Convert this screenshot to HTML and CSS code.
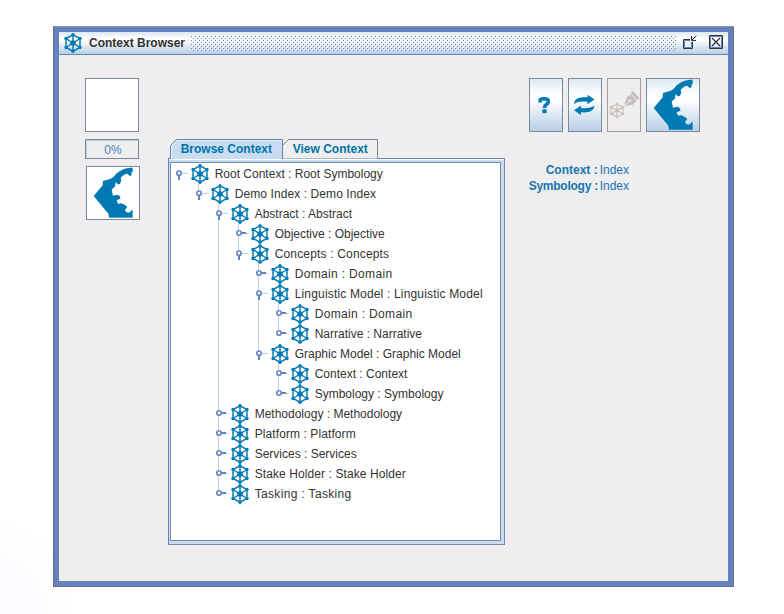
FILE: index.html
```html
<!DOCTYPE html>
<html lang="en">
<head>
<meta charset="utf-8">
<title>Context Browser</title>
<link rel="stylesheet" href="styles.css">
</head>
<body>
<svg class="defs" width="0" height="0">
  <symbol id="hex" viewBox="0 0 18 20">
    <g fill="none" stroke="currentColor" stroke-width="1.45">
      <path d="M9 1.8 16 5.5V14.5L9 18.2 2 14.5V5.5Z"/>
      <path d="M9 1.8V18.2M2 5.5 16 14.5M16 5.5 2 14.5"/>
    </g>
    <g fill="currentColor">
      <circle cx="9" cy="1.7" r="1.7"/><circle cx="16" cy="5.5" r="1.7"/><circle cx="16" cy="14.5" r="1.7"/>
      <circle cx="9" cy="18.3" r="1.7"/><circle cx="2" cy="14.5" r="1.7"/><circle cx="2" cy="5.5" r="1.7"/>
      <circle cx="9" cy="10" r="2.8"/>
    </g>
  </symbol>
  <symbol id="open" viewBox="0 0 13 12">
    <path d="M7 4.5H13" stroke="#b8cfe5"/>
    <circle cx="4" cy="4.2" r="2.2" fill="#fff" stroke="#6382bf" stroke-width="1.6"/>
    <path d="M4 6V11" stroke="#6382bf" stroke-width="2"/>
  </symbol>
  <symbol id="shut" viewBox="0 0 13 12">
    <path d="M7 4.5H13" stroke="#b8cfe5"/>
    <circle cx="4" cy="4" r="2.2" fill="#fff" stroke="#6382bf" stroke-width="1.6"/>
    <path d="M6 4H11" stroke="#6382bf" stroke-width="2"/>
  </symbol>
  <symbol id="kite" viewBox="0 0 162 162">
    <path fill="#007ab3" d="M140 5V19L135 20 138 25 132 31 124 23 117 25 109 30 104 36 106 43 102 54 96 55 89 49 87 61 77 71 81 89 94 86 102 91 103 98 92 103 96 113 106 112 116 116 124 123 117 131 120 137 126 140 134 137 135 133H140V155H69L67 143 23 90 50 58 51 45 74 38 82 34 92 22 103 14 116 8 131 5Z"/>
  </symbol>
</svg>

<main class="window">
  <header class="titlebar">
    <svg class="hex"><use href="#hex"/></svg>
    <h1>Context Browser</h1>
    <svg class="bumps" aria-hidden="true" shape-rendering="crispEdges">
      <defs><pattern id="dots" width="4" height="4" patternUnits="userSpaceOnUse"><path fill="#6382bf" d="M0 0h1v1H0zM2 2h1v1H2z"/><path fill="#fff" d="M1 1h1v1H1zM3 3h1v1H3z"/></pattern></defs>
      <rect width="100%" height="100%" fill="url(#dots)"/>
    </svg>
    <svg class="winbtn restore" viewBox="0 0 15 15">
      <path d="M1.5 4.5H10.5V13.5H1.5Z" fill="none" stroke="#333"/><path d="M2.5 5.5H9.5V12.5H2.5Z" fill="#e8f0f8" stroke="#6382bf"/>
      <path d="M8 7V2H14V7Z" fill="#e0ebf6"/><path d="M14.5 .5 10 5M9.5 1V5.5H14" fill="none" stroke="#333"/>
    </svg>
    <svg class="winbtn close" viewBox="0 0 14 14">
      <path d="M.5 .5H13.5V13.5H.5Z" fill="none" stroke="#333"/><path d="M1.5 1.5H12.5V12.5H1.5Z" fill="none" stroke="#6382bf"/>
      <path d="M3 3 11 11M11 3 3 11" stroke="#333" stroke-width="1.3"/>
    </svg>
  </header>

  <div class="content">
    <aside class="left">
      <div class="preview"></div>
      <div class="progress">0%</div>
      <div class="preview kite"><svg><use href="#kite"/></svg></div>
    </aside>

    <section class="browser">
      <nav class="tabs">
        <svg class="tabshapes" viewBox="0 0 210 20">
          <path d="M114.5 19.5V6.5L120.5 .5H209.5V19.5" fill="#eee" stroke="#7a8a99"/>
          <path d="M2.5 20V6.5L8.5 .5H114.5V20" fill="#c8ddf2" stroke="#6382bf"/>
          <path d="M3.5 20V7L9 1.5H114" fill="none" stroke="#e8f2fb"/>
        </svg>
        <span class="tab first">Browse Context</span><span class="tab">View Context</span>
      </nav>
      <div class="pane">
        <ul class="tree">
          <li><div class="row"><svg class="knob"><use href="#open"/></svg><svg class="hex"><use href="#hex"/></svg><span>Root Context : Root Symbology</span></div>
            <ul>
              <li><div class="row"><svg class="knob"><use href="#open"/></svg><svg class="hex"><use href="#hex"/></svg><span class="loose1">Demo Index : Demo Index</span></div>
                <ul>
                  <li><div class="row"><svg class="knob"><use href="#open"/></svg><svg class="hex"><use href="#hex"/></svg><span>Abstract : Abstract</span></div>
                    <ul>
                      <li><div class="row"><svg class="knob"><use href="#shut"/></svg><svg class="hex"><use href="#hex"/></svg><span>Objective : Objective</span></div></li>
                      <li><div class="row"><svg class="knob"><use href="#open"/></svg><svg class="hex"><use href="#hex"/></svg><span class="loose2">Concepts : Concepts</span></div>
                        <ul>
                          <li><div class="row"><svg class="knob"><use href="#shut"/></svg><svg class="hex"><use href="#hex"/></svg><span class="loose3">Domain : Domain</span></div></li>
                          <li><div class="row"><svg class="knob"><use href="#open"/></svg><svg class="hex"><use href="#hex"/></svg><span class="loose2">Linguistic Model : Linguistic Model</span></div>
                            <ul>
                              <li><div class="row"><svg class="knob"><use href="#shut"/></svg><svg class="hex"><use href="#hex"/></svg><span class="loose3">Domain : Domain</span></div></li>
                              <li><div class="row"><svg class="knob"><use href="#shut"/></svg><svg class="hex"><use href="#hex"/></svg><span>Narrative : Narrative</span></div></li>
                            </ul>
                          </li>
                          <li><div class="row"><svg class="knob"><use href="#open"/></svg><svg class="hex"><use href="#hex"/></svg><span>Graphic Model : Graphic Model</span></div>
                            <ul>
                              <li><div class="row"><svg class="knob"><use href="#shut"/></svg><svg class="hex"><use href="#hex"/></svg><span>Context : Context</span></div></li>
                              <li><div class="row"><svg class="knob"><use href="#shut"/></svg><svg class="hex"><use href="#hex"/></svg><span>Symbology : Symbology</span></div></li>
                            </ul>
                          </li>
                        </ul>
                      </li>
                    </ul>
                  </li>
                  <li><div class="row"><svg class="knob"><use href="#shut"/></svg><svg class="hex"><use href="#hex"/></svg><span>Methodology : Methodology</span></div></li>
                  <li><div class="row"><svg class="knob"><use href="#shut"/></svg><svg class="hex"><use href="#hex"/></svg><span class="loose1">Platform : Platform</span></div></li>
                  <li><div class="row"><svg class="knob"><use href="#shut"/></svg><svg class="hex"><use href="#hex"/></svg><span>Services : Services</span></div></li>
                  <li><div class="row"><svg class="knob"><use href="#shut"/></svg><svg class="hex"><use href="#hex"/></svg><span class="loose1">Stake Holder : Stake Holder</span></div></li>
                  <li><div class="row"><svg class="knob"><use href="#shut"/></svg><svg class="hex"><use href="#hex"/></svg><span class="loose3">Tasking : Tasking</span></div></li>
                </ul>
              </li>
            </ul>
          </li>
        </ul>
      </div>
    </section>

    <aside class="right">
      <div class="toolbar">
        <button class="btn" aria-label="Help"><svg viewBox="0 0 32 52"><path d="M10.2 23.5V20.8Q12 19.5 15 19.9Q18.4 20 18.4 22.6C18.4 25.6 14.4 25 14.4 29" fill="none" stroke="#007ab3" stroke-width="3.6"/><rect x="12.3" y="30.3" width="4.4" height="4" rx="1" fill="#007ab3"/></svg></button>
        <button class="btn" aria-label="Refresh"><svg viewBox="0 0 32 52"><g fill="#007ab3"><path d="M5 25.2C5.3 19.5 10 17.8 18.5 18.3V15.8L25.5 20.5 18.5 25.2V22.7C13 22.3 8.5 22.3 5 25.2Z"/><path d="M25.3 26.6C25 32.3 20.5 33.8 12 33.3V35.9L5 31.2 12 26.5V29C17.5 29.4 22 29.4 25.3 26.6Z"/></g></svg></button>
        <button class="btn disabled" aria-label="Edit" disabled><svg viewBox="0 0 32 52">
          <g stroke="#c9c1bb" stroke-width="1.1" fill="none"><path d="M9 25 15 28.2V34.8L9 38 3 34.8V28.2ZM9 25V38M3 28.2 15 34.8M15 28.2 3 34.8"/></g>
          <g fill="#c9c1bb"><circle cx="9" cy="31.5" r="1.9"/><circle cx="9" cy="25" r="1.2"/><circle cx="15" cy="28.2" r="1.2"/><circle cx="15" cy="34.8" r="1.2"/><circle cx="9" cy="38" r="1.2"/><circle cx="3" cy="34.8" r="1.2"/><circle cx="3" cy="28.2" r="1.2"/></g>
          <path d="M16 27 18.5 18.5 23 15.5 28.5 21.5 25.5 25.5Z" fill="#c4bebe"/><path d="M16.5 26.5 21.5 22" stroke="#eee"/><circle cx="22" cy="21.5" r="1.2" fill="#eee"/><path d="M23.7 13 30.3 20" stroke="#c4bebe" stroke-width="3"/>
        </svg></button>
        <button class="btn wide" aria-label="Symbol"><svg class="kitesvg"><use href="#kite"/></svg></button>
      </div>
      <dl class="info">
        <dt>Context :</dt><dd>Index</dd>
        <dt class="tight">Symbology :</dt><dd>Index</dd>
      </dl>
    </aside>
  </div>
</main>
</body>
</html>
```
FILE: styles.css
```css
* { box-sizing: border-box; }
body {
  margin: 0;
  height: 614px;
  overflow: hidden;
  padding: 26px 0 0 53px;
  background: radial-gradient(ellipse 75px 95px at 0 614px, #f8fafd 0, #fcfdff 75%, #fff 100%) #fff;
  font: 12px/16px "Liberation Sans", Arial, sans-serif;
  color: #333;
}
svg { display: block; }
.defs { position: absolute; }
.window {
  width: 681px;
  height: 561px;
  border: 1px solid #6b6f78;
  border-top-color: #8d929c;
  background: #eee;
  box-shadow: inset 0 0 0 5px #6382bf;
  padding: 5px;
}
.titlebar {
  display: flex;
  align-items: center;
  height: 23px;
  padding: 0 5px 0 5px;
  border-bottom: 1px solid #6382bf;
  background: linear-gradient(#dde8f3 0, #fff 30%, #fff 35%, #b8cfe5 100%);
}
.hex { width: 18px; height: 20px; color: #007ab3; flex: none; }
.titlebar h1 { margin: 0 5px 0 7px; font-size: 12px; line-height: 22px; width: 97px; white-space: nowrap; }
.bumps { flex: 1; height: 15px; margin-top: 1px; }
.winbtn { flex: none; }
.restore { width: 15px; height: 15px; margin: -1px 12px 0 6px; }
.close { width: 14px; height: 14px; margin-top: -2px; }

.content { display: flex; padding: 23px 28px 0 26px; height: 526px; }
.left { width: 84px; }
.preview { width: 54px; height: 54px; border: 1px solid #7a8a99; background: #fff; }
.preview svg, .kitesvg { width: 54px; height: 54px; margin: -1px; }
.preview.kite { margin-left: 1px; }
.progress {
  width: 54px; height: 20px; margin: 7px 0;
  border: 1px solid #7a8a99;
  box-shadow: inset 1px 1px #b8cfe5;
  text-align: center; line-height: 20px; color: #4c7cba;
  padding-left: 2px;
}
.browser { width: 337px; padding-top: 61px; margin-left: -1px; }
.tabs { display: flex; position: relative; height: 19px; }
.tabshapes { position: absolute; left: 0; top: 0; width: 210px; height: 20px; z-index: 1; }
.tab { position: relative; z-index: 2; width: 112px; padding-left: 10px; line-height: 20px; font-weight: bold; color: #0073a8; white-space: nowrap; }
.tab.first { width: 115px; padding-left: 13px; }
.pane {
  width: 337px; height: 387px;
  padding: 3px 3px 3px 1px;
  border: 1px solid #6382bf;
  border-right-color: #7a8a99;
  border-bottom-color: #7a8a99;
  background: #c8ddf2;
  box-shadow: inset 0 1px #fff;
}
.tree { height: 100%; border: 1px solid #7a8a99; background: #fff; }
.tree, .tree ul { list-style: none; margin: 0; padding: 0; }
.tree { padding: 1px 0 0 4px; }
.tree ul { padding-left: 20px; }
.tree li { position: relative; }
.tree ul > li::before { content: ""; position: absolute; left: 3px; top: 0; width: 1px; height: 100%; background: #b8cfe5; }
.tree ul > li:last-child::before { height: 10px; }
.row { display: flex; height: 20px; line-height: 20px; position: relative; white-space: nowrap; }
.knob { width: 13px; height: 12px; margin: 5px 3px 0 0; flex: none; }
.row .hex { margin-top: -.5px; }
.row span { margin-left: 6px; }
.loose1 { letter-spacing: .09px; }
.loose2 { letter-spacing: .17px; }
.loose3 { letter-spacing: .34px; }

.right { width: 172px; margin-left: 24px; }
.toolbar { display: flex; gap: 5px; }
.btn {
  width: 34px; height: 54px; padding: 0;
  border: 1px solid #7a8a99;
  background: linear-gradient(#dde8f3 0, #fff 30%, #fff 40%, #b8cfe5 100%);
}
.btn svg { width: 32px; height: 52px; }
.btn.disabled { background: #eee; border-color: #a09ea3; }
.btn.wide { width: 54px; }
.btn .kitesvg { width: 54px; height: 54px; margin: -1px; }
.info { display: grid; grid-template-columns: 69px auto; column-gap: 2px; margin: 30px 0 0; color: #1777b0; }
.info dt { font-weight: bold; text-align: right; white-space: nowrap; }
.info .tight { letter-spacing: -.25px; }
.info dd { margin: 0; }
```
